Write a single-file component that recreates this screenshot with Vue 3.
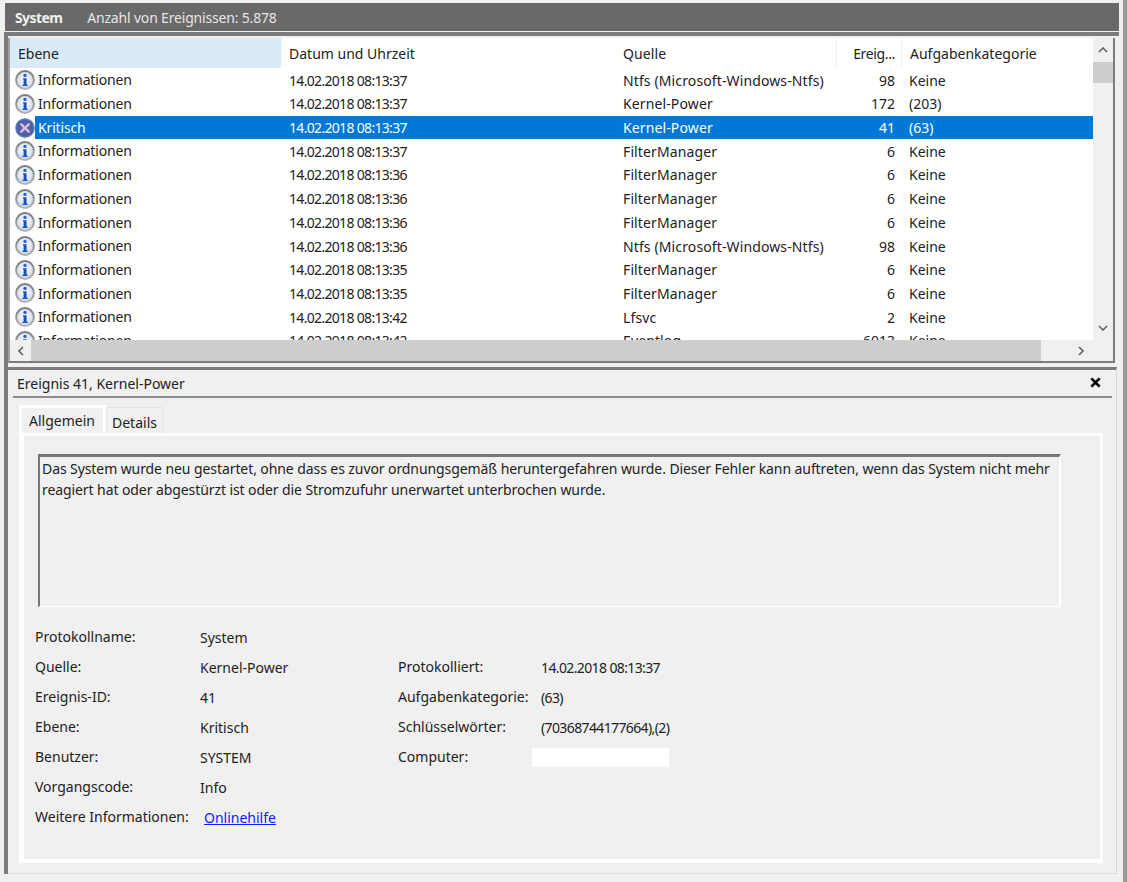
<script setup>
const rows = [
  ['i','Informationen','14.02.2018 08:13:37','Ntfs (Microsoft-Windows-Ntfs)','98','Keine'],
  ['i','Informationen','14.02.2018 08:13:37','Kernel-Power','172','(203)'],
  ['x','Kritisch','14.02.2018 08:13:37','Kernel-Power','41','(63)'],
  ['i','Informationen','14.02.2018 08:13:37','FilterManager','6','Keine'],
  ['i','Informationen','14.02.2018 08:13:36','FilterManager','6','Keine'],
  ['i','Informationen','14.02.2018 08:13:36','FilterManager','6','Keine'],
  ['i','Informationen','14.02.2018 08:13:36','FilterManager','6','Keine'],
  ['i','Informationen','14.02.2018 08:13:36','Ntfs (Microsoft-Windows-Ntfs)','98','Keine'],
  ['i','Informationen','14.02.2018 08:13:35','FilterManager','6','Keine'],
  ['i','Informationen','14.02.2018 08:13:35','FilterManager','6','Keine'],
  ['i','Informationen','14.02.2018 08:13:42','Lfsvc','2','Keine'],
  ['i','Informationen','14.02.2018 08:13:42','Eventlog','6013','Keine'],
]
const leftFields = [
  ['Protokollname:','System'],
  ['Quelle:','Kernel-Power'],
  ['Ereignis-ID:','41'],
  ['Ebene:','Kritisch'],
  ['Benutzer:','SYSTEM'],
  ['Vorgangscode:','Info'],
]
const rightFields = [
  ['Protokolliert:','14.02.2018 08:13:37'],
  ['Aufgabenkategorie:','(63)'],
  ['Schlüsselwörter:','(70368744177664),(2)'],
  ['Computer:',''],
]
</script>

<template>
  <div class="root">
    <div class="titlebar"><b>System</b><span>Anzahl von Ereignissen: 5.878</span></div>
    <div class="frame">
      <section class="list">
        <div class="list-main">
          <div class="table">
            <div class="row head">
              <div class="c c1 hot">Ebene</div>
              <div class="c c2">Datum und Uhrzeit</div>
              <div class="c c3">Quelle</div>
              <div class="c c4 sep">Ereig...</div>
              <div class="c c5 sep">Aufgabenkategorie</div>
            </div>
            <div class="rows">
              <div v-for="(r, n) in rows" :key="n" class="row" :class="{ sel: r[0] === 'x' }">
                <div class="c c1 lvl">
                  <svg class="ico" viewBox="0 0 20 20" width="20" height="20">
                    <defs>
                      <linearGradient id="ring" x1="0" y1="0" x2="0" y2="1"><stop offset="0" stop-color="#7c7c7c"/><stop offset="1" stop-color="#b4b4b4"/></linearGradient>
                      <radialGradient id="ig" cx="50%" cy="45%" r="55%"><stop offset="0" stop-color="#fff"/><stop offset="1" stop-color="#c9d7ee"/></radialGradient>
                      <radialGradient id="xg" cx="50%" cy="50%" r="55%"><stop offset="0" stop-color="#7a4f9c"/><stop offset="1" stop-color="#3f66ad"/></radialGradient>
                    </defs>
                    <template v-if="r[0] === 'i'">
                      <circle cx="10" cy="10" r="8.9" fill="url(#ig)" stroke="url(#ring)" stroke-width="2"/>
                      <circle cx="10" cy="5.4" r="1.7" fill="#2a5fc6"/>
                      <path d="M8 8.2h3.6v6.6h1v1.3H7.4v-1.3h1.2V9.5H8z" fill="#1f50b5"/>
                    </template>
                    <template v-else>
                      <circle cx="10" cy="10" r="9.2" fill="url(#xg)" stroke="#5c80bd" stroke-width="1.2"/>
                      <path d="M6.3 6.3l7.4 7.4M13.7 6.3l-7.4 7.4" stroke="#c9c6e4" stroke-width="2.4" stroke-linecap="round"/>
                    </template>
                  </svg>
                  <span class="lvl-text">{{ r[1] }}</span>
                </div>
                <div class="c c2">{{ r[2] }}</div>
                <div class="c c3">{{ r[3] }}</div>
                <div class="c c4">{{ r[4] }}</div>
                <div class="c c5">{{ r[5] }}</div>
              </div>
            </div>
          </div>
          <div class="vbar">
            <svg class="arrow" viewBox="0 0 10 6" width="10" height="6"><path d="M1 5l4-4 4 4" fill="none" stroke="#606060" stroke-width="1.6"/></svg>
            <div class="vthumb"></div>
            <div class="grow"></div>
            <svg class="arrow" viewBox="0 0 10 6" width="10" height="6"><path d="M1 1l4 4 4-4" fill="none" stroke="#606060" stroke-width="1.6"/></svg>
          </div>
        </div>
        <div class="hbar">
          <div class="harrow"><svg viewBox="0 0 6 10" width="6" height="10"><path d="M5 1L1 5l4 4" fill="none" stroke="#606060" stroke-width="1.6"/></svg></div>
          <div class="hthumb"></div>
          <div class="hend"><svg viewBox="0 0 6 10" width="6" height="10"><path d="M1 1l4 4-4 4" fill="none" stroke="#606060" stroke-width="1.6"/></svg></div>
        </div>
      </section>

      <section class="detail">
        <div class="detail-head">
          <span>Ereignis 41, Kernel-Power</span>
          <svg class="close" viewBox="0 0 12 12" width="11" height="11"><path d="M1.5 1.5l9 9M10.5 1.5l-9 9" stroke="#000" stroke-width="3"/></svg>
        </div>
        <div class="tabs">
          <div class="tab active">Allgemein</div>
          <div class="tab">Details</div>
        </div>
        <div class="tabpanel">
          <div class="message">Das System wurde neu gestartet, ohne dass es zuvor ordnungsgemäß heruntergefahren wurde. Dieser Fehler kann auftreten, wenn das System nicht mehr reagiert hat oder abgestürzt ist oder die Stromzufuhr unerwartet unterbrochen wurde.</div>
          <div class="fields">
            <div class="col-left">
              <div v-for="f in leftFields" :key="f[0]" class="field">
                <span class="lab">{{ f[0] }}</span><span class="val">{{ f[1] }}</span>
              </div>
              <div class="field">
                <span class="lab">Weitere Informationen:</span><a class="help" href="#">Onlinehilfe</a>
              </div>
            </div>
            <div class="col-right">
              <div v-for="f in rightFields" :key="f[0]" class="field">
                <span class="lab lab-r">{{ f[0] }}</span>
                <span v-if="f[1]" class="val">{{ f[1] }}</span>
                <span v-else class="blank"></span>
              </div>
            </div>
          </div>
        </div>
      </section>
    </div>
  </div>
</template>

<style>
html, body { margin: 0; background: #f0f0f0; }
</style>

<style scoped>
.root {
  width: 1127px; height: 882px; box-sizing: border-box; overflow: hidden;
  padding: 3px 0 0 5px; background: #f0f0f0; color: #222;
  font-family: "Noto Sans", "Open Sans", sans-serif; font-size: 14px;
  display: flex; flex-direction: column;
  border-right: 4px solid #9a9a9a;
}
.titlebar {
  height: 28px; width: 1114px; flex: none; background: #696969; color: #f0f0f0;
  display: flex; align-items: center; gap: 25px; padding-left: 10px; box-sizing: border-box;
}
.titlebar b { font-weight: 700; letter-spacing: -0.6px; }
.titlebar span { color: #e6e6e6; letter-spacing: -0.18px; }
.frame {
  margin-top: 1px; margin-left: -1px; width: 1115px; flex: 1; box-sizing: border-box;
  border-top: 4px solid #7c7c7c; border-left: 4px solid #7c7c7c;
  display: flex; flex-direction: column; margin-bottom: 8px;
}
.list {
  width: 1107px; height: 325px; flex: none; box-sizing: border-box; margin-top: 2px;
  border-right: 2px solid #7c7c7c; border-bottom: 2px solid #7c7c7c; border-left: 2px solid #a0a0a0;
  display: flex; flex-direction: column;
}
.list-main { display: flex; height: 302px; flex: none; }
.table { width: 1083px; background: #fff; overflow: hidden; }
.rows { padding-top: 0.4px; }
.row { display: grid; grid-template-columns: 271px 334px 221px 65px 192px; height: 23.7px; align-items: center; }
.head { height: 30px; }
.c { white-space: nowrap; padding-left: 8px; box-sizing: border-box; line-height: 22px; padding-top: 1px; }
.c2 { letter-spacing: -0.68px; }
.c3 { letter-spacing: 0.12px; }
.hot { background: #d9ebf9; }
.head .c { height: 30px; line-height: 32px; padding-top: 0; }
.head .c2 { letter-spacing: 0; }
.head .c4 { letter-spacing: -0.35px; }
.sep { border-left: 1px solid #f0f0f0; }
.c4 { text-align: right; padding-left: 0; padding-right: 6px; }
.lvl { display: flex; align-items: center; padding: 0 0 0 5px; height: 100%; }
.ico { flex: none; }
.lvl-text { padding: 1px 0 0 3px; flex: 1; line-height: 22.7px; letter-spacing: -0.15px; }
.sel .c { background: #0078d7; color: #fff; height: 100%; line-height: 22.7px; }
.sel .lvl { background: transparent; }
.sel .lvl-text { background: #0078d7; color: #fff; }
.vbar { width: 20px; background: #f0f0f0; display: flex; flex-direction: column; align-items: center; padding: 9px 0 9px; box-sizing: border-box; }
.arrow { flex: none; }
.vthumb { width: 20px; height: 21px; background: #cdcdcd; margin-top: 9px; flex: none; }
.grow { flex: 1; }
.hbar { flex: 1; display: flex; background: #f0f0f0; }
.harrow { width: 21px; display: flex; align-items: center; justify-content: center; flex: none; }
.hthumb { width: 1010px; background: #cdcdcd; flex: none; }
.hend { flex: 1; display: flex; align-items: center; justify-content: flex-end; padding-right: 29px; }
.detail {
  margin-top: 4px; flex: 1; margin-right: 2px; box-sizing: border-box;
  border-top: 3px solid #7c7c7c; display: flex; flex-direction: column;
  border-right: 1px solid #d8d8d8; border-bottom: 1px solid #dcdcdc;
  padding: 0 0 10px 5px;
}
.detail-head {
  height: 26px; flex: none; margin-right: 4px; border-bottom: 2px solid #8c8c8c;
  display: flex; align-items: center; justify-content: space-between; padding: 0 11px 0 4px;
}
.close { position: relative; top: -1px; }
.tabs { display: flex; align-items: flex-end; margin: 7px 0 0 6px; height: 28px; flex: none; }
.tab { box-sizing: border-box; height: 26px; padding: 0 5px; line-height: 30px; border: 1px solid #e4e4e4; border-bottom: 0; }
.tab.active { height: 29px; padding: 0 0 0 7px; width: 87px; line-height: 26px; border: 3px solid #fff; border-bottom: 0; position: relative; z-index: 1; margin-bottom: -1px; }
.tabpanel {
  flex: 1; margin: 0 13px 0 6px; box-sizing: border-box;
  border-style: solid; border-color: #fff; border-width: 3px 3px 4px 5px;
  padding: 18px 39px 0 14px; display: flex; flex-direction: column;
}
.message {
  height: 153px; flex: none; box-sizing: border-box; padding: 1px 0 0 2px; line-height: 21px; letter-spacing: -0.085px;
  border-top: 3px solid #777; border-left: 2px solid #777; border-right: 2px solid #fff; border-bottom: 1px solid #fff;
}
.fields { display: flex; margin: 16px 0 0 -3px; }
.col-left { width: 363px; flex: none; }
.col-right { margin-top: 30px; }
.col-right .val { letter-spacing: -0.62px; }
.field { display: flex; height: 29.9px; align-items: center; }
.lab { width: 165px; flex: none; position: relative; top: -1px; }
.lab-r { width: 143px; }
.blank { width: 137px; height: 19px; background: #fff; margin-left: -9px; }
.help { color: #0a1fff; margin-left: 4px; text-decoration: underline; }
</style>
